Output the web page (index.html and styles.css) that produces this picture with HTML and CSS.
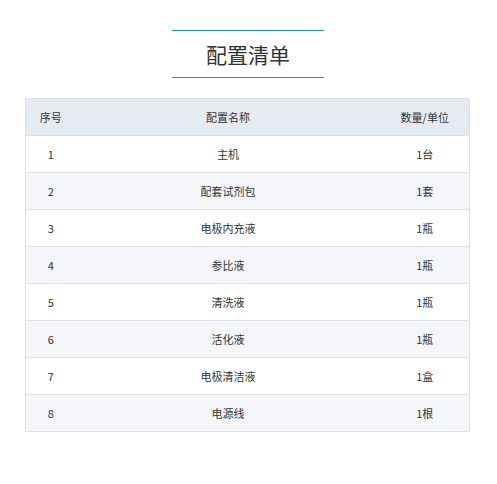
FILE: index.html
```html
<!DOCTYPE html>
<html lang="zh-CN">
<head>
<meta charset="utf-8">
<link rel="stylesheet" href="styles.css">
</head>
<body>
<div class="page">
  <div class="title-wrap">
    <h1 class="title">配置清单</h1>
  </div>
  <table class="list">
    <colgroup>
      <col class="c1"><col class="c2"><col class="c3">
    </colgroup>
    <thead>
      <tr><th>序号</th><th>配置名称</th><th>数量/单位</th></tr>
    </thead>
    <tbody>
      <tr><td>1</td><td>主机</td><td>1台</td></tr>
      <tr><td>2</td><td>配套试剂包</td><td>1套</td></tr>
      <tr><td>3</td><td>电极内充液</td><td>1瓶</td></tr>
      <tr><td>4</td><td>参比液</td><td>1瓶</td></tr>
      <tr><td>5</td><td>清洗液</td><td>1瓶</td></tr>
      <tr><td>6</td><td>活化液</td><td>1瓶</td></tr>
      <tr><td>7</td><td>电极清洁液</td><td>1盒</td></tr>
      <tr><td>8</td><td>电源线</td><td>1根</td></tr>
    </tbody>
  </table>
</div>
</body>
</html>
```

FILE: styles.css
```css
html, body {
  margin: 0;
  padding: 0;
  background: #fff;
}
body {
  font-family: "Noto Sans CJK SC", "Noto Sans", sans-serif;
  color: #333;
}
.page {
  padding: 30px 27px 0 25px;
}
.title-wrap {
  display: flex;
  justify-content: center;
}
.title {
  width: 152px;
  margin: 0 0 0 1px;
  border-top: 1px solid #1a8fd8;
  border-bottom: 1px solid #1a8fd8;
  font-size: 21px;
  font-weight: 400;
  text-align: center;
  line-height: 46px;
  height: 46px;
  color: #333;
}
.list {
  margin-top: 20px;
  width: 100%;
  border-collapse: collapse;
  table-layout: fixed;
  font-size: 11px;
  border: 1px solid #dde2e9;
}
.c1 { width: 50px; }
.c3 { width: 89px; }
.list th, .list td {
  height: 36px;
  padding: 0;
  text-align: center;
  font-weight: 400;
  border-bottom: 1px solid #dde2e9;
}
.list th {
  background: #e6ebf2;
}
.list tbody tr:nth-child(even) td {
  background: #f4f6f9;
}
```
